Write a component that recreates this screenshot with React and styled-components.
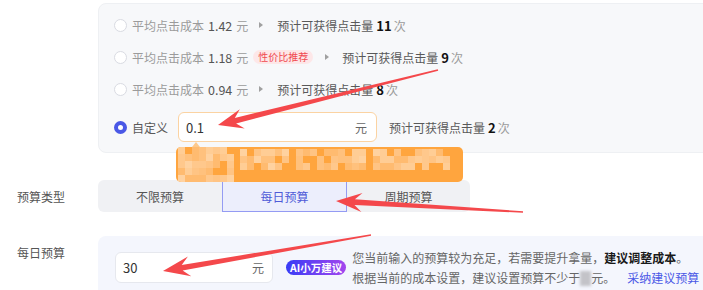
import React from "react";
import styled, { createGlobalStyle } from "styled-components";

const Global = createGlobalStyle`
  body {
    margin: 0;
    background: #fff;
    font-family: "Noto Sans CJK SC", "Noto Sans", sans-serif;
    overflow: hidden;
  }
`;

const Page = styled.div`
  position: relative;
  width: 703px;
  height: 290px;
  overflow: hidden;
  font-size: 12px;
  color: #555;
`;

// 出价面板
const CostPanel = styled.div`
  margin: 3px 0 0 98px;
  width: 640px;
  height: 150px;
  box-sizing: border-box;
  background: #f7f8fa;
  border: 1px solid #eef0f3;
  border-radius: 8px;
  padding: 5px 0 0 15px;
`;

const Row = styled.div`
  display: flex;
  align-items: center;
  height: ${(p) => p.h || 32}px;
  margin-top: ${(p) => p.mt || 0}px;
  white-space: nowrap;
`;

const Radio = styled.span`
  width: 13px;
  height: 13px;
  box-sizing: border-box;
  border-radius: 50%;
  background: #fff;
  border: ${(p) => (p.checked ? "4px solid #4a58e6" : "1px solid #d9dbe2")};
  margin-right: 5px;
  flex-shrink: 0;
`;

const Muted = styled.span`
  color: #9b9b9b;
`;

const Num = styled.span`
  color: #555;
  font-size: 12.5px;
  margin: 0 4px;
`;

const Dark = styled.span`
  color: #595959;
`;

const Strong = styled.span`
  color: #111;
  font-weight: 700;
  font-size: 13px;
  margin: 0 2px 0 3px;
`;

const Caret = styled.span`
  width: 0;
  height: 0;
  border-top: 3px solid transparent;
  border-bottom: 3px solid transparent;
  border-left: 4px solid #a0a0a0;
  margin: 0 ${(p) => p.mr || 14}px 0 ${(p) => p.ml || 11}px;
`;

const Tag = styled.span`
  margin-left: 5px;
  height: 14px;
  line-height: 14px;
  padding: 0 5px;
  border-radius: 7px;
  background: #fde7e8;
  color: #f04a4f;
  font-size: 10px;
`;

const CostInput = styled.div`
  display: flex;
  align-items: center;
  justify-content: space-between;
  width: 199px;
  height: 30px;
  box-sizing: border-box;
  margin: 0 12px 0 10px;
  padding: 0 9px 0 7px;
  background: #fff;
  border: 1px solid #fbd3a2;
  border-radius: 6px;
  color: #333;
  font-size: 13px;
`;

const Unit = styled.span`
  color: #666;
  font-size: 12px;
`;

// 遮挡的提示
const Tip = styled.div`
  position: absolute;
  left: 176px;
  top: 147px;
  width: 287px;
  height: 35px;
  border-radius: 5px;
  background: #ffa53e;
  overflow: hidden;
  z-index: 2;
  svg {
    display: block;
  }
`;

const TipPointer = styled.span`
  position: absolute;
  left: 192px;
  top: 142px;
  width: 0;
  height: 0;
  border-left: 4px solid transparent;
  border-right: 4px solid transparent;
  border-bottom: 5px solid #fdc98c;
  z-index: 2;
`;

const FieldRow = styled.div`
  display: flex;
  align-items: ${(p) => p.align || "center"};
  margin-top: ${(p) => p.mt || 0}px;
`;

const Label = styled.div`
  width: 98px;
  box-sizing: border-box;
  padding-left: 17px;
  color: #555;
  flex-shrink: 0;
  padding-top: ${(p) => p.pt || 0}px;
`;

const Segmented = styled.div`
  display: grid;
  grid-template-columns: 124px 125px 123px;
  height: 32px;
  background: #f0f1f4;
  border-radius: 6px;
`;

const SegItem = styled.div`
  display: flex;
  align-items: center;
  justify-content: center;
  box-sizing: border-box;
  color: ${(p) => (p.active ? "#4f5bd8" : "#555")};
  background: ${(p) => (p.active ? "#eceefc" : "transparent")};
  border: 1px solid ${(p) => (p.active ? "#949bf3" : "transparent")};
`;

const BudgetPanel = styled.div`
  flex: 1;
  height: 60px;
  background: #f4f6fd;
  border-radius: 8px 0 0 0;
  display: flex;
  padding: 16px 0 0 17px;
  box-sizing: border-box;
  align-items: flex-start;
`;

const BudgetInput = styled(CostInput)`
  width: 158px;
  height: 31px;
  margin: 0;
  border-color: #e6e8ee;
  padding: 0 8px 0 7px;
`;

const AiBadge = styled.span`
  margin: 8px 6px 0 13px;
  height: 15px;
  line-height: 15px;
  padding: 0 4px;
  border-radius: 8px;
  background: linear-gradient(90deg, #383cf6, #a346ee);
  color: #fff;
  font-size: 10.5px;
  font-weight: 700;
  white-space: nowrap;
`;

const Advice = styled.div`
  margin-top: -4px;
  line-height: 20px;
  color: #666;
  white-space: nowrap;
  b {
    color: #1a1a1a;
    font-weight: 700;
  }
`;

const Blur = styled.span`
  display: inline-block;
  width: 11px;
  height: 15px;
  vertical-align: -3px;
  background: #c3c3c8;
  filter: blur(1.5px);
`;

const Link = styled.span`
  color: #4a58e6;
  margin-left: 12px;
`;

const Overlay = styled.svg`
  position: absolute;
  left: 0;
  top: 0;
  pointer-events: none;
  z-index: 5;
`;

function arrowPoints(tx, ty, px, py, L = 26, hw = 10) {
  const dx = px - tx;
  const dy = py - ty;
  const len = Math.hypot(dx, dy);
  const ux = dx / len;
  const uy = dy / len;
  const nx = -uy;
  const ny = ux;
  const w0 = 0.8;
  const w1 = 2.8;
  const bx = px - ux * L;
  const by = py - uy * L;
  const kx = px - ux * L * 0.72;
  const ky = py - uy * L * 0.72;
  const pts = [
    [tx + nx * w0, ty + ny * w0],
    [kx + nx * w1, ky + ny * w1],
    [bx + nx * hw, by + ny * hw],
    [px, py],
    [bx - nx * hw, by - ny * hw],
    [kx - nx * w1, ky - ny * w1],
    [tx - nx * w0, ty - ny * w0],
  ];
  return pts.map((p) => p.map((v) => v.toFixed(1)).join(",")).join(" ");
}

const arrows = [
  [438, 70, 218, 125, 25, 10],
  [523, 212, 336, 201, 26, 9.5],
  [371, 235, 163, 271, 27, 10],
];

// 马赛克
const mosaicShades = ["#ffc17d", "#ffc88c", "#ffbb70", "#ffcd95", "#ffc484", "#ffd2a0"];
function mosaicCells() {
  const cells = [];
  let seed = 7;
  const rnd = () => {
    seed = (seed * 9301 + 49297) % 233280;
    return seed / 233280;
  };
  for (let y = 0; y < 35; y += 7) {
    for (let x = 2; x < 56; x += 7) {
      if (rnd() > 0.12) cells.push([x, y, mosaicShades[Math.floor(rnd() * 6)]]);
    }
  }
  for (let x = 64; x < 272; x += 7) {
    if (x > 186 && x < 194) continue;
    for (let y = 2; y < 17; y += 7) {
      if (rnd() > 0.2) cells.push([x, y, mosaicShades[Math.floor(rnd() * 6)]]);
    }
  }
  return cells;
}
const cells = mosaicCells();

const options = [
  { cost: "1.42", clicks: "11" },
  { cost: "1.18", clicks: "9", tag: "性价比推荐" },
  { cost: "0.94", clicks: "8" },
];

export default function App() {
  return (
    <Page>
      <Global />
      <CostPanel>
        {options.map((o) => (
          <Row key={o.cost}>
            <Radio />
            <Muted>平均点击成本</Muted>
            <Num>{o.cost}</Num>
            <Muted>元</Muted>
            {o.tag ? (
              <>
                <Tag>{o.tag}</Tag>
                <Caret ml={12} mr={13} />
              </>
            ) : (
              <Caret />
            )}
            <Dark>预计可获得点击量</Dark>
            <Strong>{o.clicks}</Strong>
            <Muted>次</Muted>
          </Row>
        ))}
        <Row h={30} mt={7}>
          <Radio checked />
          <Dark>自定义</Dark>
          <CostInput>
            <span>0.1</span>
            <Unit>元</Unit>
          </CostInput>
          <Dark>预计可获得点击量</Dark>
          <Strong>2</Strong>
          <Muted>次</Muted>
        </Row>
      </CostPanel>

      <TipPointer />
      <Tip>
        <svg width="287" height="35">
          {cells.map(([x, y, c], i) => (
            <rect key={i} x={x} y={y} width="7" height="7" fill={c} />
          ))}
        </svg>
      </Tip>

      <FieldRow mt={27}>
        <Label>预算类型</Label>
        <Segmented>
          <SegItem>不限预算</SegItem>
          <SegItem active>每日预算</SegItem>
          <SegItem>周期预算</SegItem>
        </Segmented>
      </FieldRow>

      <FieldRow mt={24} align="flex-start">
        <Label pt={8}>每日预算</Label>
        <BudgetPanel>
          <BudgetInput>
            <span>30</span>
            <Unit>元</Unit>
          </BudgetInput>
          <AiBadge>AI小万建议</AiBadge>
          <Advice>
            <div>
              您当前输入的预算较为充足，若需要提升拿量，<b>建议调整成本</b>。
            </div>
            <div>
              根据当前的成本设置，建议设置预算不少于<Blur />元。
              <Link>采纳建议预算</Link>
            </div>
          </Advice>
        </BudgetPanel>
      </FieldRow>

      <Overlay width="703" height="290">
        {arrows.map((a, i) => (
          <polygon key={i} points={arrowPoints(...a)} fill="#f4484b" />
        ))}
      </Overlay>
    </Page>
  );
}
